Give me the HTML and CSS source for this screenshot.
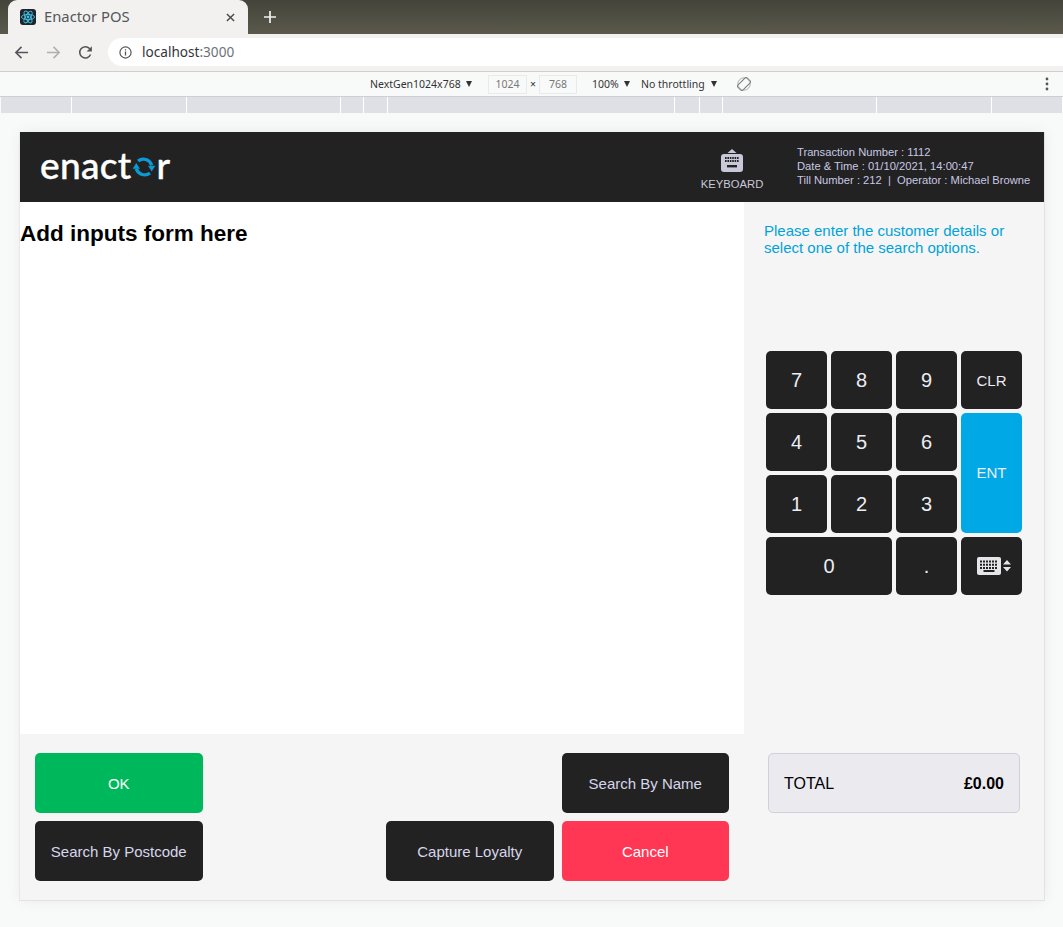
FILE: index.html
```html
<!DOCTYPE html>
<html lang="en">

<head>
  <meta charset="UTF-8">
  <meta name="viewport" content="width=device-width, initial-scale=1.0">
  <title>Enactor POS</title>
  <link rel="stylesheet" href="styles.css">
</head>

<body>
  <!-- browser chrome -->
  <div class="tabstrip">
    <div class="tab">
      <svg class="favicon" viewBox="0 0 16 16">
        <rect width="16" height="16" rx="3" fill="#20232a" />
        <g fill="none" stroke="#3fc4e6" stroke-width=".9">
          <ellipse cx="8" cy="8" rx="6.6" ry="2.6" />
          <ellipse cx="8" cy="8" rx="6.6" ry="2.6" transform="rotate(60 8 8)" />
          <ellipse cx="8" cy="8" rx="6.6" ry="2.6" transform="rotate(120 8 8)" />
        </g>
        <circle cx="8" cy="8" r="1.4" fill="#3fc4e6" />
      </svg>
      <span class="tab-title">Enactor POS</span>
      <svg class="tab-close" viewBox="0 0 10 10">
        <path d="M1 1l8 8M9 1l-8 8" stroke="#4a4a4a" stroke-width="1.6" fill="none" />
      </svg>
    </div>
    <svg class="new-tab" viewBox="0 0 12 12">
      <path d="M6 0v12M0 6h12" stroke="#f2f1ef" stroke-width="1.7" fill="none" />
    </svg>
  </div>

  <div class="toolbar">
    <svg class="nav-icon" viewBox="0 0 16 16">
      <path d="M15 8H2M8 2L2 8l6 6" stroke="#55565a" stroke-width="1.7" fill="none" />
    </svg>
    <svg class="nav-icon" viewBox="0 0 16 16">
      <path d="M1 8h13M8 2l6 6-6 6" stroke="#b0b0b0" stroke-width="1.7" fill="none" />
    </svg>
    <svg class="nav-icon" viewBox="0 0 16 16">
      <path d="M13.4 10.2A6 6 0 1 1 12.3 3.8L14 5.5" stroke="#55565a" stroke-width="1.7" fill="none" />
      <path d="M14.8 1.2v5.6H9.2z" fill="#55565a" />
    </svg>
    <div class="omnibox">
      <svg class="info-icon" viewBox="0 0 14 14">
        <circle cx="7" cy="7" r="6" stroke="#55565a" stroke-width="1.3" fill="none" />
        <path d="M7 6v4.2M7 3.6v1.3" stroke="#55565a" stroke-width="1.4" fill="none" />
      </svg>
      <span class="url">localhost<span class="url-port">:3000</span></span>
    </div>
  </div>

  <div class="device-bar">
    <span class="device-name">NextGen1024x768</span>
    <span class="caret caret-name"></span>
    <span class="size-box">1024</span>
    <span class="size-x">×</span>
    <span class="size-box size-box-h">768</span>
    <span class="device-zoom">100%</span>
    <span class="caret"></span>
    <span class="device-throttle">No throttling</span>
    <span class="caret"></span>
    <svg class="rotate-icon" viewBox="0 0 14 14">
      <g transform="rotate(45 7 7)" fill="none" stroke="#777" stroke-width="1">
        <rect x="3.5" y="0.5" width="7" height="13" rx="1" />
      </g>
      <circle cx="7" cy="7" r="6.2" fill="none" stroke="#999" stroke-width=".8" />
    </svg>
    <svg class="dots-icon" viewBox="0 0 4 14">
      <circle cx="2" cy="2" r="1.4" fill="#555" />
      <circle cx="2" cy="7" r="1.4" fill="#555" />
      <circle cx="2" cy="12" r="1.4" fill="#555" />
    </svg>
  </div>

  <div class="ruler">
    <i></i><i></i><i></i><i></i><i></i><i></i><i></i><i></i><i></i><i></i><i></i>
  </div>

  <!-- page -->
  <div class="viewport">
    <div class="app">
      <header class="app-header">
        <div class="logo">enact<svg class="logo-o" viewBox="0 0 24 24">
            <path d="M5.5 5.5A9.4 9.4 0 0 1 20.4 10" stroke="#0a9ad6" stroke-width="3.6" fill="none" />
            <path d="M18.5 18.5A9.4 9.4 0 0 1 3.6 14" stroke="#0a9ad6" stroke-width="3.6" fill="none" />
            <path d="M-.4 14h8L3.6 7.5z" fill="#0a9ad6" />
            <path d="M16.4 10.5h8l-4 6.5z" fill="#0a9ad6" />
          </svg>r</div>
        <div class="keyboard-btn">
          <svg class="keyboard-icon" viewBox="0 0 22 24">
            <path d="M11 0l4.5 4h-9z" fill="#c9c8d8" />
            <rect y="5" width="22" height="18" rx="3" fill="#c9c8d8" />
            <path d="M4 9h14M4 12h14" stroke="#222" stroke-width="1.8" stroke-dasharray="1.6 .8" fill="none" />
            <rect x="6" y="16" width="10" height="2.4" fill="#222" />
          </svg>
          <span>KEYBOARD</span>
        </div>
        <div class="txn-info">
          <div>Transaction Number : 1112</div>
          <div>Date &amp; Time : 01/10/2021, 14:00:47</div>
          <div>Till Number : 212 &nbsp;|&nbsp; Operator : Michael Browne</div>
        </div>
      </header>

      <main class="form-area">
        <h3 class="form-title">Add inputs form here</h3>
      </main>

      <aside class="side-panel">
        <p class="prompt">Please enter the customer details or select one of the search options.</p>
        <div class="keypad">
          <button type="button" class="key">7</button>
          <button type="button" class="key">8</button>
          <button type="button" class="key">9</button>
          <button type="button" class="key key-small">CLR</button>
          <button type="button" class="key">4</button>
          <button type="button" class="key">5</button>
          <button type="button" class="key">6</button>
          <button type="button" class="key key-small key-enter">ENT</button>
          <button type="button" class="key">1</button>
          <button type="button" class="key">2</button>
          <button type="button" class="key">3</button>
          <button type="button" class="key key-zero">0</button>
          <button type="button" class="key">.</button>
          <button type="button" class="key key-board">
            <svg class="key-board-icon" viewBox="0 0 34 18">
              <rect width="24" height="18" rx="2" fill="#e6e6ea" />
              <path d="M3 4.5h18M3 7.7h18M3 10.9h18" stroke="#222" stroke-width="2" stroke-dasharray="2 1" fill="none" />
              <rect x="6.5" y="13" width="11" height="2" fill="#222" />
              <path d="M30 3l4 4.5h-8zM30 14.5l-4-4.5h8z" fill="#e6e6ea" />
            </svg>
          </button>
        </div>
      </aside>

      <div class="actions">
        <button type="button" class="action action-ok">OK</button>
        <button type="button" class="action action-name">Search By Name</button>
        <button type="button" class="action">Search By Postcode</button>
        <button type="button" class="action action-loyalty">Capture Loyalty</button>
        <button type="button" class="action action-cancel">Cancel</button>
      </div>

      <div class="total-area">
        <div class="total-box">
          <span>TOTAL</span>
          <b>£0.00</b>
        </div>
      </div>
    </div>
  </div>
</body>

</html>
```

FILE: styles.css
```css
* {
  box-sizing: border-box;
}

html,
body {
  margin: 0;
  padding: 0;
}

body {
  height: 927px;
  overflow: hidden;
  background-color: #f8fafa;
  font-family: "Liberation Sans", Arial, sans-serif;
}

/* browser chrome */
.tabstrip {
  height: 34px;
  display: flex;
  align-items: flex-end;
  background: linear-gradient(#45443b, #5a594b);
}

.tab {
  margin-left: 8px;
  width: 240px;
  height: 34px;
  padding: 0 12px;
  display: flex;
  align-items: center;
  background-color: #f2f1ef;
  border-radius: 9px 9px 0 0;
}

.favicon {
  width: 16px;
  height: 16px;
}

.tab-title {
  margin: 0 0 2px 8px;
  flex: 1;
  font-family: "Noto Sans", sans-serif;
  font-size: 14.8px;
  color: #55565a;
}

.tab-close {
  width: 9px;
  height: 9px;
  margin-right: 1px;
}

.new-tab {
  width: 12px;
  height: 12px;
  margin: 0 0 11px 16px;
}

.toolbar {
  height: 37px;
  padding: 4px 0 5px 14px;
  display: flex;
  align-items: center;
  background-color: #f2f1ef;
}

.nav-icon {
  width: 15px;
  height: 15px;
  margin-right: 17px;
}

.omnibox {
  margin-left: -2px;
  flex: 1;
  height: 28px;
  padding-left: 11px;
  display: flex;
  align-items: center;
  background-color: #fff;
  border-radius: 14px 0 0 14px;
}

.info-icon {
  width: 13px;
  height: 13px;
}

.url {
  margin: 0 0 2px 10px;
  font-family: "Noto Sans", sans-serif;
  font-size: 13.6px;
  color: #33343a;
}

.url-port {
  color: #6d7078;
}

.device-bar {
  height: 26px;
  padding-left: 370px;
  display: flex;
  align-items: center;
  background-color: #f8fafa;
  border-top: 1px solid #cfcfcf;
  border-bottom: 1px solid #cfcfcf;
  font-family: "Noto Sans", sans-serif;
  font-size: 10.5px;
  color: #333;
}

.device-name {
  width: 96px;
}

.caret {
  width: 0;
  height: 0;
  border-left: 3.5px solid transparent;
  border-right: 3.5px solid transparent;
  border-top: 6px solid #333;
}

.caret-name {
  margin-right: 16px;
}

.size-box {
  width: 39px;
  height: 19px;
  line-height: 17px;
  text-align: center;
  border: 1px solid #eaeaea;
  color: #777;
}

.size-box-h {
  width: 38px;
}

.size-x {
  width: 12px;
  text-align: center;
}

.device-zoom {
  margin-left: 15px;
  width: 32px;
}

.device-throttle {
  margin-left: 11px;
  width: 70px;
}

.rotate-icon {
  margin-left: 20px;
  width: 14px;
  height: 14px;
}

.dots-icon {
  margin-left: 294px;
  width: 4px;
  height: 14px;
}

.ruler {
  height: 16px;
  padding-left: 1px;
  display: grid;
  grid-template-columns: 71px 115px 154px 23px 24px 287px 25px 23px 154px 115px 1fr;
  background-color: #f8fafa;
}

.ruler i {
  background-color: #dfe0e5;
  border-right: 1px solid #fff;
}

/* page */
.viewport {
  padding: 19px 0 0 20px;
}

.app {
  width: 1025px;
  height: 769px;
  display: grid;
  grid-template-columns: 724px 300px;
  grid-template-rows: 70px 532px 166px;
  background-color: #f5f5f5;
  border-right: 1px solid #e2e2e2;
  border-bottom: 1px solid #e2e2e2;
  box-shadow: -1px 0 0 #e8e8e8, 0 0 14px rgba(0, 0, 0, .06);
}

.app-header {
  grid-column: 1 / 3;
  padding-left: 20px;
  display: flex;
  align-items: center;
  background-color: #222;
}

.logo {
  margin-top: -5px;
  display: flex;
  align-items: center;
  font-family: Lato, sans-serif;
  font-size: 37px;
  font-weight: 500;
  line-height: 40px;
  color: #fff;
  letter-spacing: .3px;
  -webkit-text-stroke: .4px #fff;
}

.logo-o {
  width: 22px;
  height: 22px;
  margin: 5px 1px 0 2px;
  overflow: visible;
}

.keyboard-btn {
  margin-left: auto;
  width: 64px;
  padding-top: 4px;
  display: flex;
  flex-direction: column;
  align-items: center;
  font-size: 11.25px;
  color: #c9c8d8;
}

.keyboard-icon {
  width: 22px;
  height: 24px;
  margin: 0 0 5px;
}

.txn-info {
  margin: -2px 0 0 33px;
  width: 247px;
  font-size: 11.2px;
  line-height: 14px;
  white-space: nowrap;
  color: #c9c8e4;
}

.form-area {
  background-color: #fff;
}

.form-title {
  margin: 19px 0 0;
  font-size: 22.5px;
  line-height: 26px;
  font-weight: bold;
  color: #000;
}

.side-panel {
  padding: 20px 21px 0 20px;
}

.prompt {
  margin: 0;
  height: 129px;
  font-size: 15px;
  line-height: 17px;
  color: #00a3d9;
}

.keypad {
  margin-left: 2px;
  display: grid;
  grid-template-columns: repeat(4, 61px);
  grid-template-rows: repeat(4, 58px);
  gap: 4px;
}

.key {
  padding: 0;
  border: none;
  border-radius: 5px;
  background-color: #222;
  color: #ececf2;
  font-family: inherit;
  font-size: 20px;
  cursor: pointer;
}

.key-small {
  font-size: 15px;
}

.key-enter {
  grid-row: 2 / 4;
  grid-column: 4;
  padding-bottom: 2px;
  background-color: #00a9e6;
}

.key-zero {
  grid-column: 1 / 3;
}

.key-board {
  display: flex;
  align-items: center;
  justify-content: center;
}

.key-board-icon {
  width: 34px;
  height: 18px;
  margin-left: 5px;
}

.actions {
  padding: 19px 15px 0;
  display: grid;
  grid-template-columns: repeat(4, 1fr);
  grid-template-rows: 60px 60px;
  gap: 8px;
}

.action {
  padding: 0;
  border: none;
  border-radius: 5px;
  background-color: #222;
  color: #d6d6ea;
  font-family: inherit;
  font-size: 15px;
  cursor: pointer;
}

.action-ok {
  background-color: #00b85c;
  color: #fff;
}

.action-name {
  grid-column: 4;
}

.action-loyalty {
  grid-column: 3;
}

.action-cancel {
  background-color: #ff3654;
  color: #fff;
}

.total-area {
  padding: 19px 24px 0;
}

.total-box {
  height: 60px;
  padding: 1px 15px 0;
  display: flex;
  align-items: center;
  justify-content: space-between;
  background-color: #ebeaef;
  border: 1px solid #d0d0dc;
  border-radius: 5px;
  font-size: 16px;
  color: #000;
}
```
